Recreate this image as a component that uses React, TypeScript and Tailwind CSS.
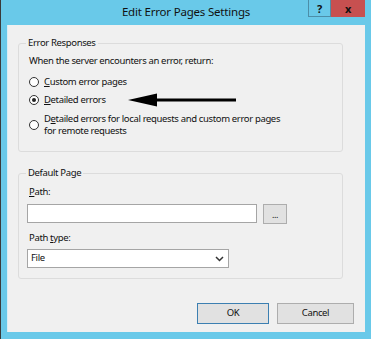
import React from "react";

const font = { fontFamily: '"Noto Sans", "Open Sans", sans-serif' };

function Radio({ checked }: { checked?: boolean }) {
  return (
    <span className="w-[10px] h-[10px] rounded-full border border-[#333] bg-white flex items-center justify-center shrink-0">
      {checked && <span className="w-[4px] h-[4px] rounded-full bg-[#222]" />}
    </span>
  );
}

export default function App() {
  return (
    <div
      className="w-[371px] h-[339px] bg-[#69c9e9] border-l border-[#3a3a3a] flex flex-col text-[9.5px] tracking-[-0.35px] text-[#111]"
      style={font}
    >
      {/* title bar */}
      <header className="relative h-[25px] shrink-0 flex items-center justify-center">
        <h1 className="text-[11.5px] tracking-[-0.2px] leading-none pb-[1px]">Edit Error Pages Settings</h1>
        <div className="absolute top-0 right-[6px] flex">
          <button className="w-[23px] h-[17px] border border-t-0 border-[#4c8ea8] flex items-center justify-center text-[11px] font-bold leading-none">
            ?
          </button>
          <button className="w-[34px] h-[17px] bg-[#c75050] flex items-center justify-center text-[11px] font-bold leading-none">
            x
          </button>
        </div>
      </header>

      {/* client area */}
      <main className="ml-[6px] mr-[6px] mb-[7px] flex-1 bg-[#f0f0f0] border-l border-[#d8eef7] flex flex-col">
        <fieldset className="mt-[11px] ml-[10px] w-[325px] border border-[#dcdcdc] rounded-[3px] pl-[10px] pb-[14px]">
          <legend className="ml-[-3px] px-[2px] leading-[14px]">Error Responses</legend>
          <p className="mt-[4px] leading-[14px]">When the server encounters an error, return:</p>
          <label className="mt-[7px] h-[14px] flex items-center gap-[5px]">
            <Radio />
            <span>
              <u>C</u>ustom error pages
            </span>
          </label>
          <label className="mt-[4px] h-[14px] flex items-center gap-[5px]">
            <Radio checked />
            <span>
              <u>D</u>etailed errors
            </span>
            <svg width="108" height="14" viewBox="0 0 108 14" className="ml-[17px]">
              <polygon points="0,7 29,0.5 29,13.5" fill="#000" />
              <rect x="27" y="5.5" width="81" height="3" fill="#000" />
            </svg>
          </label>
          <label className="mt-[6px] flex items-center gap-[5px]">
            <Radio />
            <span className="leading-[12px]">
              D<u>e</u>tailed errors for local requests and custom error pages
              <br />
              for remote requests
            </span>
          </label>
        </fieldset>

        <fieldset className="mt-[14px] ml-[10px] w-[325px] border border-[#dcdcdc] rounded-[3px] pl-[8px] pb-[10px]">
          <legend className="ml-[-1px] px-[2px] leading-[14px]">Default Page</legend>
          <p className="mt-[5px] ml-[2px] leading-[14px]">
            <u>P</u>ath:
          </p>
          <div className="mt-[5px] flex items-start gap-[6px]">
            <div className="w-[230px] h-[19px] bg-white border border-[#a5a5a5]" />
            <button className="w-[24px] h-[20px] bg-[#e1e1e1] border border-[#adadad] text-[9px] leading-none">
              ...
            </button>
          </div>
          <p className="mt-[7px] ml-[2px] leading-[14px]">
            Path <u>t</u>ype:
          </p>
          <div className="mt-[4px] w-[202px] h-[19px] bg-white border border-[#a5a5a5] flex items-center justify-between pl-[3px] pr-[4px]">
            <span>File</span>
            <svg width="9" height="6" viewBox="0 0 9 6">
              <polyline points="1,1 4.5,4.5 8,1" fill="none" stroke="#333" strokeWidth="1.5" />
            </svg>
          </div>
        </fieldset>

        <div className="mt-[24px] mr-[11px] flex justify-end gap-[8px]">
          <button className="w-[72px] h-[21px] bg-[#e1e1e1] border border-[#3c7fb1]">OK</button>
          <button className="w-[77px] h-[21px] bg-[#e1e1e1] border border-[#adadad]">Cancel</button>
        </div>
      </main>
    </div>
  );
}
